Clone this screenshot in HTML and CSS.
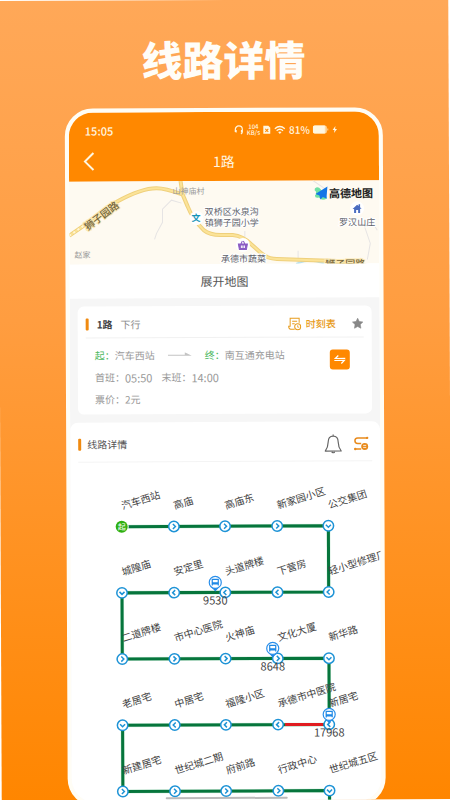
FILE: index.html
```
<!DOCTYPE html>
<html lang="zh-CN">
  <head>
    <meta charset="UTF-8">
    <meta name="viewport" content="width=device-width, initial-scale=1">
    <title>线路详情</title>
    <link rel="stylesheet" href="styles.css">
  </head>

  <body>
    <main class="poster">
      <h1 class="poster-title">线路详情</h1>

      <div class="phone">
        <header class="top">
          <div class="status">
            <span class="clock">15:05</span>
            <svg class="s-ear" viewBox="0 0 10 10"><path d="M1.500 7V4.500a3.500 3.500 0 0 1 7 0V7q0 1.500-1.500 2M2.300 5v2.500M7.700 5v2.500" fill="none" stroke="currentColor" stroke-width="1.200"/></svg>
            <span class="speed"><b>104</b><b>KB/s</b></span>
            <svg class="s-sim" viewBox="0 0 8 10"><path d="M1 1h4.500L7.500 3v6H.5V1z" fill="currentColor"/><path d="M2.500 4l3 3M5.500 4l-3 3" stroke="#ff8800" stroke-width="1"/></svg>
            <svg class="s-wifi" viewBox="0 0 12 10"><path d="M1 4q5-4.500 10 0M2.800 6q3.200-3 6.400 0" fill="none" stroke="currentColor" stroke-width="1.300"/><path d="M4.300 7.300q1.700-1.300 3.400 0L6 9.300z" fill="currentColor"/></svg>
            <span class="percent">81%</span>
            <svg class="s-bat" viewBox="0 0 16 10"><rect x="0" y="1" width="14" height="8" rx="2" fill="#ffd9a0"/><path d="M2 1h10v8H2a2 2 0 0 1-2-2V3a2 2 0 0 1 2-2z" fill="currentColor"/><path d="M15 4v2" stroke="#ffd9a0" stroke-width="1"/></svg>
            <svg class="s-bolt" viewBox="0 0 6 10"><path d="M3.600 1.500L.8 5.500h1.800l-.4 3L5.200 4.500H3.300z" fill="currentColor"/></svg>
          </div>
          <div class="nav">
            <button class="back" type="button" aria-label="返回">
              <svg viewBox="0 0 12 20"><path d="M10.500 1.500L2 10l8.500 8.500" fill="none" stroke="currentColor" stroke-width="2"/></svg>
            </button>
            <h2 class="nav-title">1路</h2>
          </div>
        </header>

        <svg class="map" viewBox="0 0 309 83" preserveAspectRatio="xMidYMid slice">
          <rect width="309" height="83" fill="#fefaf1"/>
          <g fill="none" stroke="#e6e4e4" stroke-width="1">
            <path d="M112 22L102 19 93 28V41L87 52 85 58"/>
            <path d="M243 0l13 9M294 45l6 18-3 16M301 40l6 10M175 50v12M228 70v12"/>
          </g>
          <path d="M226 83q14-6 28 0" fill="none" stroke="#b9dfea" stroke-width="2"/>
          <g fill="none" stroke="#efd07c" stroke-width="4">
            <path d="M0 54L16 43Q34 28 48 20 72 7 87 7 96 7 112 13"/>
            <path d="M111-1L113 13 118 25Q123 38 134 49 140 54 151 54H163Q173 55 181 63L191 72Q197 78 207 78L258 80 290 85"/>
          </g>
          <g fill="none" stroke="#fbe398" stroke-width="2">
            <path d="M0 54L16 43Q34 28 48 20 72 7 87 7 96 7 112 13"/>
            <path d="M111-1L113 13 118 25Q123 38 134 49 140 54 151 54H163Q173 55 181 63L191 72Q197 78 207 78L258 80 290 85"/>
          </g>
          <path d="M0 54L16 43" stroke="#fff6d8" stroke-width="2" stroke-dasharray="2 3"/>
          <text class="map-road" x="-20" y="4" transform="translate(32 34) rotate(-37)">狮子园路</text>
          <text class="map-road" x="255" y="87">狮子园路</text>
          <text class="map-village" x="103" y="13">山神庙村</text>
          <text class="map-village" x="5" y="76">赵家</text>
          <circle cx="127" cy="37" r="7" fill="#fff"/>
          <text class="map-school" x="122" y="40">文</text>
          <text class="map-place" x="135" y="34">双桥区水泉沟</text>
          <text class="map-place" x="135" y="45">镇狮子园小学</text>
          <circle cx="173" cy="64" r="7" fill="#fff"/>
          <path d="M168.500 63h9l-1 5.500h-7zM171 63l1.500-3M175 63l-1.500-3" fill="#8b5cc4" stroke="#8b5cc4" stroke-width="1"/>
          <path d="M171.500 64.500v2.500M173 64.500v2.500M174.500 64.500v2.500" stroke="#fff" stroke-width="1"/>
          <text class="map-place" x="151" y="81">承德市蔬菜</text>
          <circle cx="287" cy="28" r="7" fill="#fff"/>
          <path d="M282.500 28.500l4.500-4 1.500 1.200V24h1.500v3l1.500 1.500H290V32.500h-6V28.500z" fill="#4a6cc0"/>
          <path d="M286 29.500h2v3h-2z" fill="#fff"/>
          <text class="map-place" x="269" y="45">罗汉山庄</text>
          <path d="M245 8q3-3 6 1l6 9q-5 3-8-1-4 1-4-2 2-2 1-4-2-1-1-3z" fill="#6fe0a4"/>
          <path d="M251 16l6 2-2-6z" fill="#3fc8f0"/>
          <path d="M257.500 6L245.500 13.500l4 1.500 1 4 2.500-2.500 3.500 1.500z" fill="#1376e6"/>
          <text class="map-brand" x="259" y="17">高德地图</text>
        </svg>
        <button class="expand" type="button">展开地图</button>

        <div class="content">
          <section class="card">
            <div class="row head">
              <i class="bar"></i>
              <strong>1路</strong>
              <span class="way">下行</span>
              <button class="timetable" type="button">
                <svg viewBox="0 0 14 14"><path d="M11.500 6V1.500h-9V10M2.500 9.500H1Q1 12.500 3 12.500h4M4.500 4.500h5M4.500 7H7" fill="none" stroke="currentColor"/><circle cx="10" cy="10" r="3" fill="none" stroke="currentColor"/><path d="M10 8.500v2h1.500" fill="none" stroke="currentColor" stroke-width=".8"/></svg>
                时刻表
              </button>
              <button class="star" type="button" aria-label="收藏">
                <svg viewBox="0 0 12 12"><path d="M6 .8l1.600 3.300 3.600.5-2.600 2.500.6 3.700L6 9.100l-3.200 1.700.6-3.700L.8 4.600l3.600-.5z" fill="currentColor" stroke="currentColor" stroke-width=".6" stroke-linejoin="round"/></svg>
              </button>
            </div>
            <div class="detail">
              <div class="facts">
                <p><em>起：</em>汽车西站<svg class="arrow" viewBox="0 0 24 6"><path d="M0 3.500h24L17 0v2.500H0z" fill="#c4c4c4"/></svg><em>终：</em>南互通充电站</p>
                <p>首班：<span class="time">05:50</span>末班：<span class="time">14:00</span></p>
                <p>票价：2元</p>
              </div>
              <button class="swap" type="button" aria-label="换向">
                <svg viewBox="0 0 12 10"><path d="M11.500 4H1.500L4.500 1M.5 6h10L7.500 9" fill="none" stroke="currentColor" stroke-width="1.200"/></svg>
              </button>
            </div>
          </section>

          <section class="route">
            <div class="row route-head">
              <i class="bar"></i>
              <h3>线路详情</h3>
              <button class="bell" type="button" aria-label="提醒">
                <svg viewBox="0 0 18 20"><path d="M9 1v1.500M9 2.500q5 0 5 6 0 5 3 9H1q3-4 3-9 0-6 5-6zM7.500 18.500q1.500 1.500 3 0" fill="none" stroke="#666" stroke-width="1.200" stroke-linejoin="round"/></svg>
              </button>
              <button class="switch" type="button" aria-label="切换">
                <svg viewBox="0 0 16 16"><path d="M14 2.500H4.500a2.700 2.700 0 0 0 0 5.500H8M8 13.500H2" fill="none" stroke="currentColor" stroke-width="1.500"/><circle cx="14" cy="2.500" r="1.200" fill="currentColor"/><circle cx="2" cy="13.500" r="1.200" fill="currentColor"/><circle cx="11.500" cy="11" r="3.500" fill="currentColor"/><path d="M13 10h-3M10 12h3" stroke="#fff" stroke-width=".8"/></svg>
              </button>
            </div>

            <svg class="stops" viewBox="0 0 309 339">
              <defs>
                <g id="right">
                  <circle r="5.200"/>
                  <path d="M-1-2.500L1.500 0-1 2.500"/>
                </g>
                <g id="left">
                  <circle r="5.200"/>
                  <path d="M1-2.500L-1.500 0 1 2.500"/>
                </g>
                <g id="down">
                  <circle r="5.200"/>
                  <path d="M-2.500-1L0 1.500 2.500-1"/>
                </g>
                <g id="bus">
                  <path d="M0-1L-4.500-6h9z" fill="#1e88e5"/>
                  <circle cy="-10" r="6" fill="#fff" stroke="#2a8fea" stroke-width="1.200"/>
                  <path d="M-3-13h6v4.500h-6zM-3-8.500v1.500M3-8.500v1.500M-3-9.500h6" fill="none" stroke="#1e88e5" stroke-width="1.200"/>
                </g>
              </defs>

              <path class="line-edge" d="M51 64H257V130H51V196H257V262H51V328H257V339"/>
              <path class="line" d="M51 64H257V130H51V196H257V262H51V328H257V339"/>
              <path class="line-jam" d="M213 262h38"/>

              <g class="node">
                <use href="#right" x="103" y="64"/>
                <use href="#right" x="154" y="64"/>
                <use href="#right" x="206" y="64"/>
                <use href="#down" x="257" y="64"/>
                <use href="#down" x="51" y="130"/>
                <use href="#left" x="103" y="130"/>
                <use href="#left" x="154" y="130"/>
                <use href="#left" x="206" y="130"/>
                <use href="#left" x="257" y="130"/>
                <use href="#right" x="51" y="196"/>
                <use href="#right" x="103" y="196"/>
                <use href="#right" x="154" y="196"/>
                <use href="#right" x="206" y="196"/>
                <use href="#down" x="257" y="196"/>
                <use href="#down" x="51" y="262"/>
                <use href="#left" x="103" y="262"/>
                <use href="#left" x="154" y="262"/>
                <use href="#left" x="206" y="262"/>
                <use href="#left" x="257" y="262"/>
                <use href="#right" x="51" y="328"/>
                <use href="#right" x="103" y="328"/>
                <use href="#right" x="154" y="328"/>
                <use href="#right" x="206" y="328"/>
                <use href="#down" x="257" y="328"/>
              </g>
              <circle cx="51" cy="64" r="7" fill="#fff"/>
              <circle cx="51" cy="64" r="6" fill="#2fb010"/>
              <text class="start" x="51" y="67">起</text>

              <g class="names">
                <text transform="translate(52 47) rotate(-17)">汽车西站</text>
                <text transform="translate(104 47) rotate(-17)">高庙</text>
                <text transform="translate(155 47) rotate(-17)">高庙东</text>
                <text transform="translate(207 47) rotate(-17)">新家园小区</text>
                <text transform="translate(258 47) rotate(-17)">公交集团</text>
                <text transform="translate(52 113) rotate(-17)">城隍庙</text>
                <text transform="translate(104 113) rotate(-17)">安定里</text>
                <text transform="translate(155 113) rotate(-17)">头道牌楼</text>
                <text transform="translate(207 113) rotate(-17)">下营房</text>
                <text transform="translate(258 113) rotate(-17)">轻小型修理厂</text>
                <text transform="translate(52 179) rotate(-17)">二道牌楼</text>
                <text transform="translate(104 179) rotate(-17)">市中心医院</text>
                <text transform="translate(155 179) rotate(-17)">火神庙</text>
                <text transform="translate(207 179) rotate(-17)">文化大厦</text>
                <text transform="translate(258 179) rotate(-17)">新华路</text>
                <text transform="translate(52 245) rotate(-17)">老居宅</text>
                <text transform="translate(104 245) rotate(-17)">中居宅</text>
                <text transform="translate(155 245) rotate(-17)">福隆小区</text>
                <text transform="translate(207 245) rotate(-17)">承德市中医院</text>
                <text transform="translate(258 245) rotate(-17)">新居宅</text>
                <text transform="translate(52 311) rotate(-17)">新建居宅</text>
                <text transform="translate(104 311) rotate(-17)">世纪城二期</text>
                <text transform="translate(155 311) rotate(-17)">府前路</text>
                <text transform="translate(207 311) rotate(-17)">行政中心</text>
                <text transform="translate(258 311) rotate(-17)">世纪城五区</text>
              </g>

              <!-- running buses -->
              <use href="#bus" x="144" y="130"/>
              <use href="#bus" x="201" y="196"/>
              <use href="#bus" x="257" y="262"/>
              <text class="bus-no" x="144" y="142">9530</text>
              <text class="bus-no" x="201" y="208">8648</text>
              <text class="bus-no" x="257" y="274">17968</text>
            </svg>
          </section>
        </div>
        <div class="home-bar"></div>
      </div>
    </main>
  </body>
</html>
```
FILE: styles.css
```
* {
  box-sizing: border-box;
}
body {
  margin: 0;
  background: #fff;
  overflow: hidden;
  font-family: "Noto Sans CJK SC", sans-serif;
  font-size: 10px;
  line-height: 16px;
}
button {
  display: flex;
  align-items: center;
  justify-content: center;
  margin: 0;
  padding: 0;
  border: 0;
  background: none;
  color: inherit;
  font: inherit;
  cursor: pointer;
}
svg {
  display: block;
}
h1, h2, h3, p {
  margin: 0;
}

/* the whole poster leans a little to the left */
.poster {
  height: 100vh;
  padding: 28px 66px 0;
  overflow: hidden;
  background: linear-gradient(#ffa858, #ff9d40 40%, #ff8600);
  transform: rotate(-0.25deg);
}
.poster-title {
  height: 80px;
  color: #fffdf8;
  font-size: 41px;
  font-weight: 900;
  line-height: 60px;
  text-align: center;
}
.phone {
  position: relative;
  overflow: hidden;
  border: 4px solid #fffdf5;
  border-radius: 28px;
  background: #fff;
}

.top {
  padding-bottom: 5px;
  background: #ff8800;
  color: #fff6e0;
}
.status {
  display: flex;
  align-items: center;
  height: 34px;
  padding: 2px 41px 0 16px;
  gap: 3px;
}
.status svg {
  height: 10px;
}
.clock {
  margin-right: auto;
  font-size: 11px;
  font-weight: 500;
}
.speed {
  display: flex;
  flex-direction: column;
  font-size: 6px;
  line-height: 6px;
  text-align: center;
}
.speed b {
  font-weight: 500;
}
.percent {
  font-weight: 500;
}
.nav {
  display: grid;
  grid-template-columns: 30px 1fr 30px;
  align-items: center;
  height: 30px;
}
.back svg {
  width: 12px;
  height: 20px;
  margin-left: 10px;
}
.nav-title {
  font-size: 14px;
  font-weight: 400;
  text-align: center;
}

.map {
  width: 100%;
  height: 83px;
}
.map-road {
  font-size: 10px;
  font-weight: 500;
  fill: #75653a;
  stroke: #fbe9b4;
  stroke-width: 2px;
  paint-order: stroke;
}
.map-village {
  font-size: 8px;
  fill: #999;
}
.map-school {
  font-size: 9px;
  font-weight: 700;
  fill: #1595b8;
}
.map-place {
  font-size: 9px;
  fill: #5c6068;
  stroke: #fff;
  stroke-width: 2px;
  paint-order: stroke;
}
.map-brand {
  font-size: 11px;
  font-weight: 700;
  fill: #222;
}
.expand {
  width: 100%;
  height: 34px;
  color: #555;
  font-size: 12px;
}

.content {
  padding-top: 8px;
  background: #f6f6f6;
}
.card {
  margin: 0 8px;
  padding: 0 8px 4px;
  border-radius: 6px;
  background: #fff;
}
.row {
  display: flex;
  align-items: center;
}
.bar {
  width: 3px;
  height: 12px;
  border-radius: 1px;
  background: #f08a10;
}
.head {
  height: 32px;
  padding-top: 4px;
  border-bottom: 1px solid #f1f1f1;
  color: #444;
  gap: 8px;
}
.way {
  color: #888;
}
.timetable {
  margin-left: auto;
  color: #e89c1c;
  font-weight: 500;
  gap: 4px;
}
.timetable svg {
  width: 14px;
  height: 14px;
}
.star {
  margin-left: 8px;
  color: #888;
}
.star svg {
  width: 12px;
  height: 12px;
}
.detail {
  display: flex;
  align-items: flex-start;
  justify-content: space-between;
  padding: 6px 14px 0 9px;
  color: #999;
}
.facts p {
  display: flex;
  align-items: center;
  height: 22px;
}
.facts em {
  color: #4cb860;
  font-style: normal;
}
.arrow {
  width: 24px;
  height: 6px;
  margin: 0 13px;
}
.time {
  margin-right: 9px;
  font-size: 11px;
}
.swap {
  width: 20px;
  height: 20px;
  margin-top: 6px;
  border-radius: 3px;
  background: #ff8800;
  color: #fff;
}
.swap svg {
  width: 12px;
  height: 10px;
}

.route {
  margin-top: 8px;
  border-radius: 8px 8px 0 0;
  background: #fff;
}
.route-head {
  height: 40px;
  margin: 0 8px;
  padding: 4px 3px 0 0;
  border-bottom: 1px solid #f4f4f4;
}
.route-head h3 {
  margin: 0 auto 0 6px;
  color: #555;
  font-size: 10px;
  font-weight: 400;
}
.bell svg {
  width: 18px;
  height: 20px;
}
.switch {
  margin-left: 11px;
  color: #e88a1c;
}
.switch svg {
  width: 16px;
  height: 16px;
}

.stops {
  width: 100%;
}
.line-edge, .line, .line-jam {
  fill: none;
  stroke: #d4efe0;
  stroke-width: 4px;
}
.line {
  stroke: #06753c;
  stroke-width: 3px;
}
.line-jam {
  stroke: #e01c20;
  stroke-width: 3px;
}
.node {
  fill: #fff;
  stroke: #1e93d6;
  stroke-width: 1.5px;
}
.node path {
  fill: none;
  stroke-width: 1px;
}
.start {
  font-size: 8px;
  fill: #fff;
  text-anchor: middle;
}
.names {
  font-size: 10px;
  fill: #444;
}
.bus-no {
  font-size: 11px;
  fill: #444;
  text-anchor: middle;
}
.home-bar {
  position: absolute;
  bottom: 3px;
  left: 50%;
  width: 122px;
  height: 2px;
  margin-left: -61px;
  border-radius: 1px;
  background: #bbb;
}
```
